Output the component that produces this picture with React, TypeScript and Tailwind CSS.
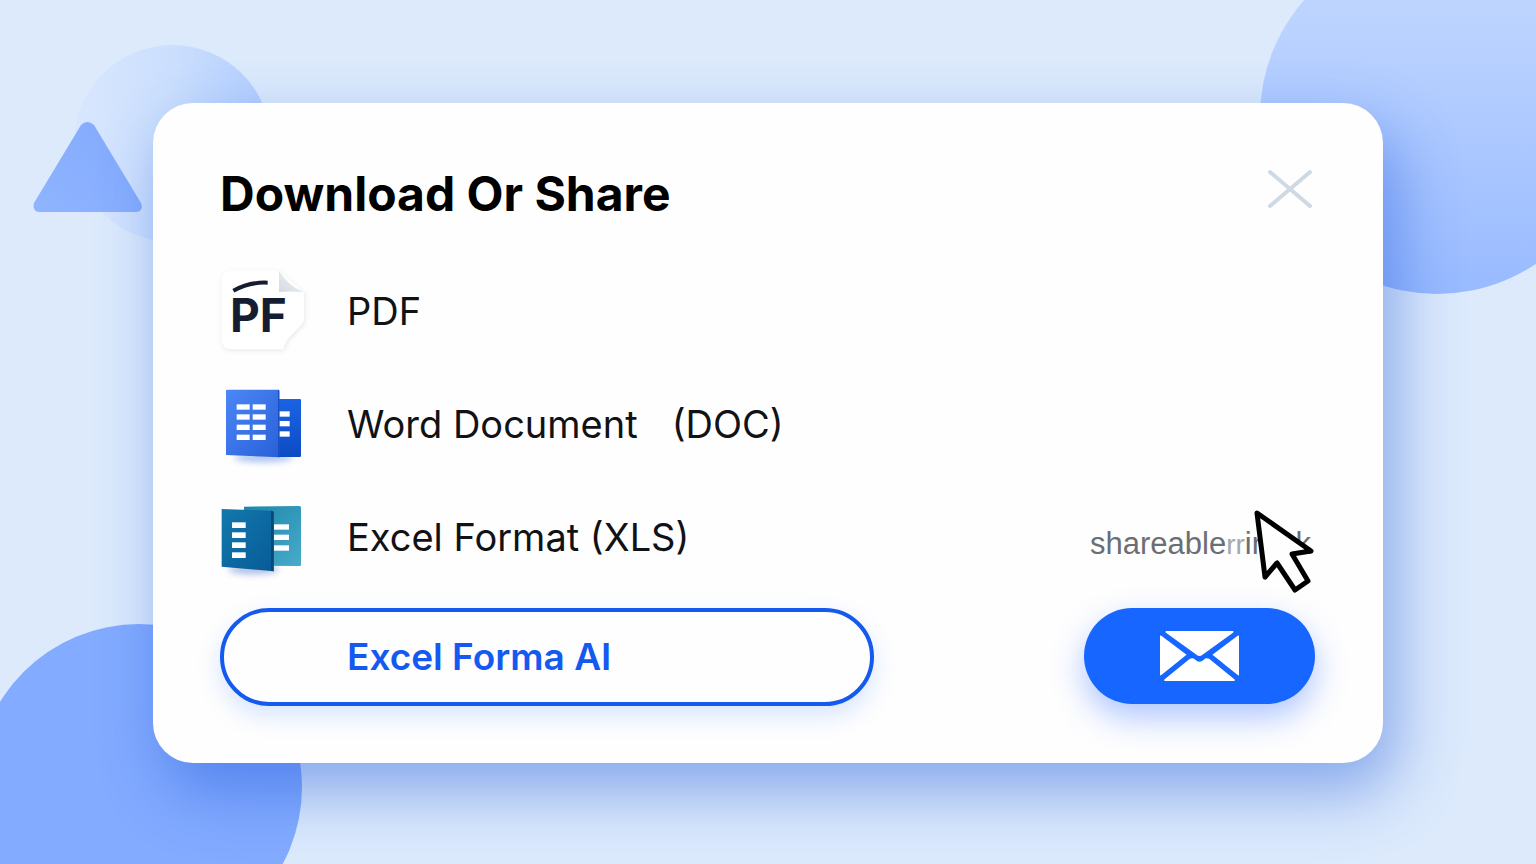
import type { ReactNode } from "react";

const PdfIcon = () => (
  <svg viewBox="30 20 270 270" className="size-[90px] shrink-0 overflow-visible" aria-hidden="true">
    <defs>
      <linearGradient id="pdf-fold" x1="0" y1="1" x2="1" y2="0">
        <stop offset="0" stopColor="#d3dae1" />
        <stop offset="1" stopColor="#f3f6f9" />
      </linearGradient>
      <filter id="pdf-shadow" x="-20%" y="-20%" width="140%" height="140%">
        <feDropShadow dx="2" dy="4" stdDeviation="6" floodColor="#64748b" floodOpacity="0.18" />
      </filter>
    </defs>
    <path
      d="M66 31H207L282 97V178Q280 190 270 198L240 228Q226 244 220 267H66Q35 267 35 234V62Q35 31 66 31Z"
      fill="#fff"
      filter="url(#pdf-shadow)"
    />
    <path d="M207 31Q232 74 281 96Q245 91 207 95Z" fill="url(#pdf-fold)" />
    <path d="M70 91Q120 64 173 67" fill="none" stroke="#151d33" strokeWidth="12" />
    <text x="60" y="215" fontFamily="Inter, sans-serif" fontSize="138" fontWeight="700" fill="#151d33">
      PF
    </text>
  </svg>
);

const DocIcon = () => (
  <svg viewBox="30 13 270 270" className="size-[90px] shrink-0 overflow-visible" aria-hidden="true">
    <defs>
      <linearGradient id="doc-front" x1="0" y1="0" x2="1" y2="1">
        <stop offset="0" stopColor="#4b87f6" />
        <stop offset="1" stopColor="#2960d8" />
      </linearGradient>
      <linearGradient id="doc-back" x1="0" y1="0" x2="0" y2="1">
        <stop offset="0" stopColor="#1b63e4" />
        <stop offset="1" stopColor="#0c4cc4" />
      </linearGradient>
      <filter id="doc-blur" x="-20%" y="-80%" width="140%" height="260%">
        <feGaussianBlur stdDeviation="9" />
      </filter>
    </defs>
    <ellipse cx="160" cy="246" rx="88" ry="14" fill="#3b6fe0" opacity="0.4" filter="url(#doc-blur)" />
    <rect x="190" y="70" width="83" height="174" rx="4" fill="url(#doc-back)" />
    <path d="M52 42H204Q208 42 208 46V245L48 238V46Q48 42 52 42Z" fill="url(#doc-front)" />
    <path d="M204 42Q208 42 208 46V245L204 244Z" fill="#1d4fc0" />
    {[86, 116, 147, 177].map((y) => (
      <g key={y} fill="#fff">
        <rect x="80" y={y} width="39" height="16" />
        <rect x="128" y={y} width="39" height="16" />
      </g>
    ))}
    {[107, 136, 167].map((y) => (
      <rect key={y} x="209" y={y} width="30" height="16" fill="#fff" />
    ))}
  </svg>
);

const XlsIcon = () => (
  <svg viewBox="30 8 270 270" className="size-[90px] shrink-0 overflow-visible" aria-hidden="true">
    <defs>
      <linearGradient id="xls-front" x1="0" y1="0" x2="1" y2="1">
        <stop offset="0" stopColor="#1279ac" />
        <stop offset="1" stopColor="#075b97" />
      </linearGradient>
      <linearGradient id="xls-back" x1="0" y1="0" x2="1" y2="1">
        <stop offset="0" stopColor="#1c86aa" />
        <stop offset="1" stopColor="#48abca" />
      </linearGradient>
      <filter id="xls-blur" x="-20%" y="-80%" width="140%" height="260%">
        <feGaussianBlur stdDeviation="9" />
      </filter>
    </defs>
    <ellipse cx="130" cy="238" rx="76" ry="14" fill="#3b5fc0" opacity="0.4" filter="url(#xls-blur)" />
    <path d="M102 49L268 47Q273 47 273 52V223Q273 227 269 227L102 226Z" fill="url(#xls-back)" />
    <path d="M35 56L186 61Q191 61 191 66V243L35 229Z" fill="url(#xls-front)" />
    <path d="M183 61Q191 61 191 66V243L183 242Z" fill="#064878" />
    {[96, 126, 156, 186].map((y) => (
      <rect key={y} x="66" y={y} width="41" height="17" fill="#fff" />
    ))}
    {[102, 133, 165].map((y) => (
      <rect key={y} x="192" y={y} width="45" height="16" fill="#fff" />
    ))}
  </svg>
);

const MailIcon = () => (
  <svg viewBox="0 0 238 150" className="h-[50px] w-[79px]" fill="#fff" aria-hidden="true">
    <path d="M17 0H221V4L128 71Q119 79 110 71L17 4Z" />
    <path d="M0 13L4 14L80 71L4 132L0 134Z" />
    <path d="M238 13L234 14L158 71L234 132L238 134Z" />
    <path d="M13 150V146L90 83Q100 79 106 86Q119 98 132 86Q138 79 148 83L225 146V150Z" />
  </svg>
);

const Pointer = () => (
  <svg
    viewBox="0 0 62 84"
    className="pointer-events-none absolute -top-[15px] right-0 h-[84px] w-[62px]"
    aria-hidden="true"
  >
    <path
      d="M4 4L58 42L39 45L55 72L42 81L24 54L12 68Z"
      fill="#fefefe"
      stroke="#000"
      strokeWidth="5"
      strokeLinejoin="round"
    />
  </svg>
);

const Backdrop = () => (
  <div className="pointer-events-none absolute inset-0 overflow-hidden" aria-hidden="true">
    <div className="absolute left-[74px] top-[45px] size-[197px] rounded-full bg-linear-to-r from-[#d8e7fd] via-[#cbdffd] to-[#b3ceff]" />
    <svg viewBox="0 0 110 92" className="absolute left-[33px] top-[121px] h-[92px] w-[110px]">
      <defs>
        <linearGradient id="triangle" x1="1" y1="0" x2="0" y2="1">
          <stop offset="0" stopColor="#82a9fd" />
          <stop offset="1" stopColor="#8fb4ff" />
        </linearGradient>
      </defs>
      <path
        d="M48 4Q54 -2 61 4L108 82Q111 89 104 91H6Q-1 90 1 82Z"
        fill="url(#triangle)"
      />
    </svg>
    <div className="absolute -right-[78px] -top-[60px] size-[354px] rounded-full bg-linear-to-b from-[#bdd4ff] from-20% to-[#98baff]" />
    <div className="absolute -bottom-[86px] -left-[24px] size-[326px] rounded-full bg-[#83abff]" />
  </div>
);

type Format = { icon: ReactNode; name: string; suffix?: string };

const FORMATS: Format[] = [
  { icon: <PdfIcon />, name: "PDF" },
  { icon: <DocIcon />, name: "Word Document", suffix: "(DOC)" },
  { icon: <XlsIcon />, name: "Excel Format (XLS)" },
];

const App = () => {
  return (
    <main className="relative flex min-h-screen items-center justify-center bg-[#dceafc] px-[153px] pt-0.5 font-['Inter',sans-serif]">
      <Backdrop />
      <section
        role="dialog"
        aria-labelledby="dialog-title"
        className="relative w-full rounded-[40px] bg-[#fefefe] pb-[57px] pl-[67px] pr-[68px] pt-[60px] shadow-[12px_28px_64px_rgba(20,80,215,0.44)]"
      >
        <header className="flex h-[60px] items-center justify-between">
          <h1 id="dialog-title" className="pt-0.5 text-[48px] font-bold leading-[60px] text-black">
            Download Or Share
          </h1>
          <button type="button" aria-label="Close" className="mb-2 cursor-pointer">
            <svg viewBox="0 0 50 40" className="h-10 w-[50px]" aria-hidden="true">
              <path d="M5 3L45 37M45 3L5 37" stroke="#cfd9e4" strokeWidth="4" strokeLinecap="round" />
            </svg>
          </button>
        </header>

        <div className="mt-8 flex items-end justify-between gap-8">
          <div className="w-[654px]">
            <ul>
              {FORMATS.map((format) => (
                <li key={format.name}>
                  <button
                    type="button"
                    className="flex h-[113px] cursor-pointer items-center gap-[37px] whitespace-nowrap text-[38px] text-[#111216]"
                  >
                    {format.icon}
                    <span className="flex gap-[34px]">
                      <span>{format.name}</span>
                      {format.suffix && <span>{format.suffix}</span>}
                    </span>
                  </button>
                </li>
              ))}
            </ul>
            <button
              type="button"
              className="mt-[14px] h-[98px] w-full cursor-pointer rounded-full border-4 border-[#1459f0] bg-[#fefefe] pl-[123px] text-left text-[37px] font-semibold text-[#1459f0] shadow-[0_10px_24px_rgba(40,110,255,0.18)]"
            >
              Excel Forma AI
            </button>
          </div>

          <div className="w-[231px] shrink-0 pb-0.5">
            <div className="relative pl-[6px] pr-1">
              <a
                href="#share"
                className="flex items-baseline justify-between font-['Liberation_Sans',sans-serif] text-[31px] leading-10 text-[#6b6e75]"
              >
                <span>
                  shareable<span className="text-[28px] text-[#a3a7ae]">rr</span>in
                </span>
                <span>k</span>
              </a>
              <Pointer />
            </div>
            <button
              type="button"
              aria-label="Share by email"
              className="mt-[43px] flex h-24 w-full cursor-pointer items-center justify-center rounded-full bg-[#1766ff] shadow-[0_14px_32px_rgba(23,90,255,0.34)]"
            >
              <MailIcon />
            </button>
          </div>
        </div>
      </section>
    </main>
  );
};

export default App;
